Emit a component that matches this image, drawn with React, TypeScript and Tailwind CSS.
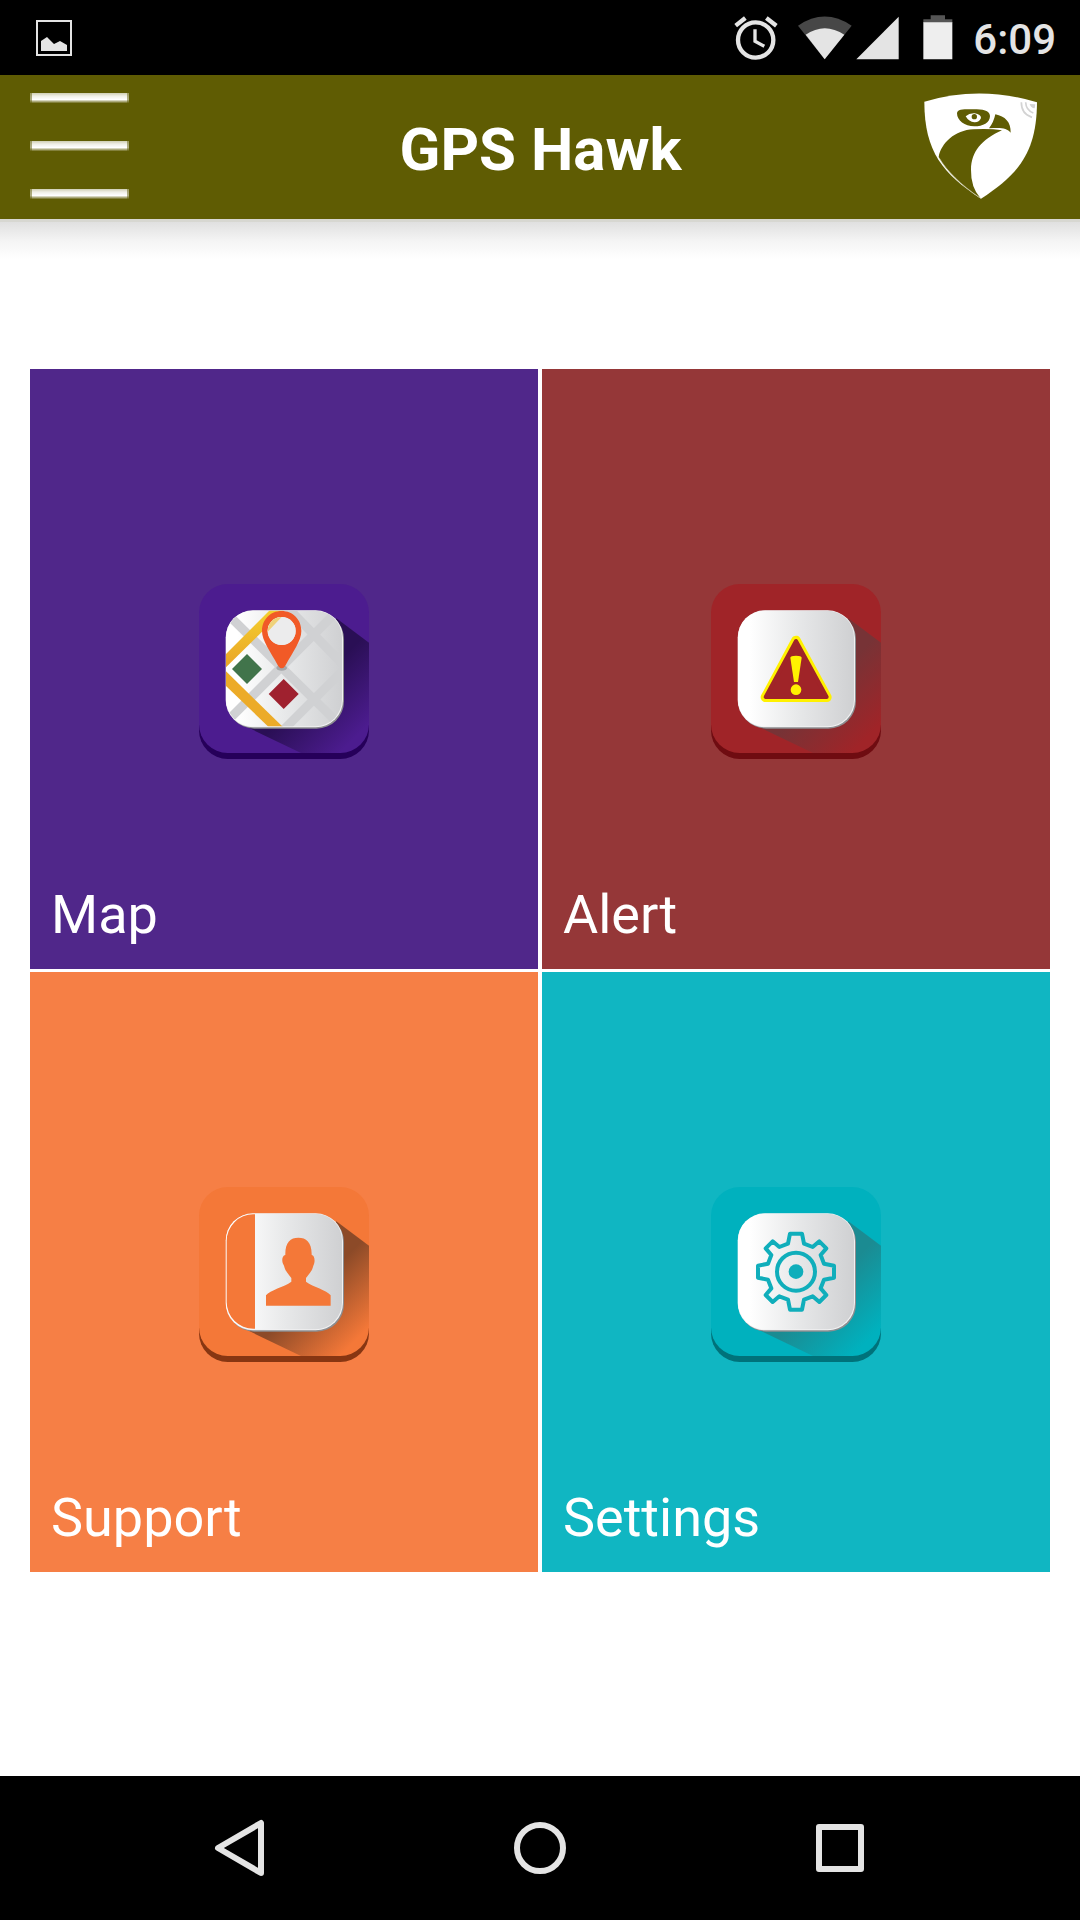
import React from 'react';

interface IconBaseProps {
    id: string;
    base: string;
    lip: string;
    shadow: string;
    children: React.ReactNode;
}

// Rounded app icon: coloured plate, long shadow and a light card on top
function IconBase({ id, base, lip, shadow, children }: IconBaseProps) {
    return (
        <svg viewBox="0 0 510 525" className="w-[170px] h-[175px] mx-auto" aria-hidden="true">
            <defs>
                <linearGradient id={`${id}-card`} x1="0" y1="0" x2="1" y2="0">
                    <stop offset="0.1" stopColor="#ffffff" />
                    <stop offset="0.5" stopColor="#e8e9ea" />
                    <stop offset="1" stopColor="#cfd0d2" />
                </linearGradient>
                <linearGradient id={`${id}-shadow`} gradientUnits="userSpaceOnUse" x1="290" y1="290" x2="465" y2="465">
                    <stop offset="0.2" stopColor={shadow} />
                    <stop offset="1" stopColor={shadow} stopOpacity="0" />
                </linearGradient>
                <clipPath id={`${id}-plate`}>
                    <rect width="510" height="507" rx="86" />
                </clipPath>
                <clipPath id={`${id}-clip`}>
                    <rect x="81" y="80" width="348" height="347" rx="80" />
                </clipPath>
            </defs>
            <rect y="18" width="510" height="507" rx="86" fill={lip} />
            <rect width="510" height="507" rx="86" fill={base} />
            <path d="M412 103L510 176V507H306L146 430Z" fill={`url(#${id}-shadow)`} clipPath={`url(#${id}-plate)`} />
            <rect x="84" y="84" width="351" height="350" rx="82" fill="#8d8e91" />
            <rect x="80" y="79" width="352" height="351" rx="82" fill="#f1f1f2" />
            <rect x="81" y="80" width="348" height="347" rx="80" fill={`url(#${id}-card)`} />
            <g clipPath={`url(#${id}-clip)`}>{children}</g>
        </svg>
    );
}

function MapIcon() {
    return (
        <IconBase id="map" base="#4c1c8f" lip="#26005a" shadow="#2a0f55">
            <defs>
                <linearGradient id="map-road" x1="0" y1="0" x2="0" y2="1">
                    <stop offset="0" stopColor="#f5d32f" />
                    <stop offset="1" stopColor="#e9a226" />
                </linearGradient>
            </defs>
            <g transform="translate(-27 -42)">
                <g stroke="#d0d1d3" strokeWidth="27" fill="none">
                    <path d="M105 125L470 485" />
                    <path d="M105 460L460 105" />
                    <path d="M270 490L480 280" />
                    <path d="M290 110L480 305" />
                </g>
                <path d="M100 260L250 110H292L100 300Z" fill="url(#map-road)" />
                <path d="M100 296L285 477H242L100 340Z" fill="#ecab28" />
                <path d="M171 252L216 297L171 342L126 297Z" fill="#41744b" />
                <path d="M281 327L326 372L281 417L236 372Z" fill="#9f212f" />
                <ellipse cx="275" cy="294" rx="16" ry="8" fill="#a6a7a9" />
                <path
                    d="M275 123C241 123 216 149 216 183C216 212 240 243 264 287Q275 303 286 287C310 243 334 212 334 183C334 149 309 123 275 123ZM275 141A42 42 0 1 1 275 225A42 42 0 1 1 275 141Z"
                    fill="#f15a27"
                    fillRule="evenodd"
                />
                <circle cx="275" cy="183" r="42" fill="#ececed" />
                <path d="M240 160A42 42 0 0 1 275 141L233 185Q233 170 240 160Z" fill="#efd27b" />
            </g>
        </IconBase>
    );
}

function AlertIcon() {
    return (
        <IconBase id="alert" base="#a02428" lip="#6f0c11" shadow="#773336">
            <g transform="translate(-33 -42)" strokeLinejoin="round">
                <path d="M288 211L196 382H381Z" fill="#fff100" stroke="#fff100" strokeWidth="28" />
                <path d="M288 213L197 381H380Z" fill="#a02428" stroke="#a02428" strokeWidth="12" />
                <path d="M271 263Q271 257 288 257Q305 257 305 263L294 336H282Z" fill="#fff100" />
                <circle cx="288" cy="359" r="16" fill="#fff100" />
            </g>
        </IconBase>
    );
}

function SupportIcon() {
    return (
        <IconBase id="support" base="#f47838" lip="#873612" shadow="#8c4a28">
            <g transform="translate(-27 -36)">
                <path d="M195 118H190A80 80 0 0 0 110 198V382A80 80 0 0 0 190 461H195Z" fill="#f47838" />
                <path
                    d="M325 188C349 188 366 202 365 240C375 241 376 262 370 272C366 290 355 299 348 309V320C370 336 410 345 422 361V392H228V361C240 345 282 336 304 320V309C297 299 286 290 282 272C274 262 275 241 286 240C285 202 301 188 325 188Z"
                    fill="#f47838"
                />
            </g>
        </IconBase>
    );
}

function SettingsIcon() {
    return (
        <IconBase id="settings" base="#00b1be" lip="#00727a" shadow="#1b8b92">
            <g transform="translate(255 254)" fill="none" stroke="#10aebb">
                <path
                    d="M-18-114H18L24-84L50-74L70-91L91-70L74-50L84-24L114-18V18L84 24L74 50L91 70L70 91L50 74L24 84L18 114H-18L-24 84L-50 74L-70 91L-91 70L-74 50L-84 24L-114 18V-18L-84-24L-74-50L-91-70L-70-91L-50-74L-24-84Z"
                    strokeWidth="12"
                    strokeLinejoin="round"
                />
                <circle r="57" strokeWidth="12" />
                <circle r="22" fill="#10aebb" stroke="none" />
            </g>
        </IconBase>
    );
}

function HawkLogo() {
    return (
        <svg viewBox="42 38 339 318" className="w-[113px] h-[106px]" role="img" aria-label="GPS Hawk logo">
            <path d="M43 64Q210 14 381 66C380 215 327 281 213 355C100 281 43 215 43 64Z" fill="#fff" />
            <path d="M86 230C93 189 135 149 190 147Q240 144 276 150C215 178 184 213 183 268Q182 320 211 353C151 312 111 274 86 230Z" fill="#5f5c03" />
            <path d="M87 232C112 274 151 312 212 354" fill="none" stroke="#c9c8a4" strokeWidth="2" />
            <path d="M141 99C142 86 162 87 190 87C218 87 239 90 240 107C240 127 219 138 193 138C164 138 141 121 141 99Z" fill="#5f5c03" />
            <path d="M167 108Q178 98 194 99Q213 102 213 113Q207 127 193 126Q177 125 167 108Z" fill="#fff" />
            <circle cx="193" cy="109" r="8" fill="#5f5c03" />
            <path d="M256 102C285 108 303 125 302 157C291 142 270 141 237 144Q251 126 256 102Z" fill="#5f5c03" />
            <g fill="none" stroke="#d3d3d3" strokeWidth="5">
                <path d="M334 66Q334 102 366 111" />
                <path d="M347 66Q348 90 370 98" />
            </g>
            <path d="M359 71L376 72L374 84Q362 83 359 71Z" fill="#d3d3d3" />
        </svg>
    );
}

function MenuIcon() {
    return (
        <svg viewBox="0 0 99 106" className="w-[99px] h-[106px]" aria-hidden="true">
            <defs>
                <linearGradient id="menu-line" x1="0" y1="0" x2="0" y2="1">
                    <stop offset="0" stopColor="#fff" stopOpacity="0.7" />
                    <stop offset="0.3" stopColor="#fff" stopOpacity="0.9" />
                    <stop offset="0.65" stopColor="#fff" />
                    <stop offset="1" stopColor="#fff" stopOpacity="0.1" />
                </linearGradient>
            </defs>
            {[0, 48, 96].map((y) => (
                <g key={y} fill="url(#menu-line)">
                    <rect x="2" y={y} width="95" height="10" />
                    <rect x="0" y={y} width="2" height="10" opacity="0.5" />
                    <rect x="97" y={y} width="2" height="10" opacity="0.5" />
                </g>
            ))}
        </svg>
    );
}

function StatusBar() {
    return (
        <div className="h-[75px] bg-black flex items-center pl-9 pr-6 text-[#e4e4e4]">
            <svg viewBox="0 0 36 36" className="size-9" aria-hidden="true">
                <rect x="1" y="1" width="34" height="34" fill="none" stroke="currentColor" strokeWidth="2" />
                <path d="M5 31V21L11 17L18 24L24 21L31 25V31Z" fill="currentColor" />
            </svg>
            <div className="ml-auto flex items-center">
                <svg viewBox="100 44 132 135" className="w-11 h-[45px]" fill="none" stroke="currentColor" aria-hidden="true">
                    <circle cx="165" cy="119" r="53" strokeWidth="13" />
                    <path d="M163 87V123L191 138" strokeWidth="10" />
                    <path d="M105 76L134 53M197 53L227 76" strokeWidth="13" />
                </svg>
                <svg viewBox="290 44 162 135" className="w-[54px] h-[45px] ml-5" aria-hidden="true">
                    <path d="M290 76Q370 21 451 76L370 177Z" fill="#474747" />
                    <path d="M313 103Q370 64 429 103L370 177Z" fill="currentColor" />
                </svg>
                <svg viewBox="466 44 129 135" className="w-[43px] h-[45px] ml-1" aria-hidden="true">
                    <path d="M594 49V177H467Z" fill="currentColor" />
                </svg>
                <svg viewBox="668 44 90 135" className="w-[30px] h-[45px] ml-6" aria-hidden="true">
                    <path d="M691 45H734V57H756V68H669V57H691Z" fill="#555" />
                    <path d="M669 66H756V177H669Z" fill="#eee" />
                </svg>
                <time className="ml-5 pt-1 text-[42px] leading-[50px] font-medium">6:09</time>
            </div>
        </div>
    );
}

const tiles = [
    { label: 'Map', color: 'bg-[#50278a]', Icon: MapIcon },
    { label: 'Alert', color: 'bg-[#953738]', Icon: AlertIcon },
    { label: 'Support', color: 'bg-[#f67f45]', Icon: SupportIcon },
    { label: 'Settings', color: 'bg-[#10b6c2]', Icon: SettingsIcon },
];

export default function App() {
    return (
        <div className="min-h-screen flex flex-col bg-white font-['Roboto',sans-serif]">
            <StatusBar />

            <header className="h-36 bg-[#5f5c03] grid grid-cols-[1fr_auto_1fr] items-center pl-[30px] pr-[43px] pb-0.5">
                <button type="button" aria-label="Menu" className="justify-self-start">
                    <MenuIcon />
                </button>
                <h1 className="pt-2 pl-3.5 text-white text-[60px] leading-[70px] font-bold">GPS Hawk</h1>
                <div className="justify-self-end">
                    <HawkLogo />
                </div>
            </header>
            <div className="h-10 border-t-3 border-[#d7d7d1] bg-linear-to-b from-[#e0e0e0] via-[#f4f4f4] to-white" />

            <main className="flex-1 px-[30px] pt-[110px] pb-12">
                <div className="grid grid-cols-2 gap-x-1 gap-y-[3px]">
                    {tiles.map(({ label, color, Icon }) => (
                        <button
                            key={label}
                            type="button"
                            className={`${color} h-[600px] flex flex-col justify-between pt-[215px] pb-[22px] px-[21px] text-left text-white`}
                        >
                            <Icon />
                            <span className="text-[54px] leading-[64px]">{label}</span>
                        </button>
                    ))}
                </div>
            </main>

            <nav className="h-36 bg-black grid grid-cols-3 px-[90px] text-[#e4e4e4]">
                <button type="button" aria-label="Back" className="flex items-center justify-center">
                    <svg viewBox="0 0 60 60" className="size-[60px]" fill="none" stroke="currentColor" strokeWidth="6" strokeLinejoin="round">
                        <path d="M51 5V55L8 30Z" />
                    </svg>
                </button>
                <button type="button" aria-label="Home" className="flex items-center justify-center">
                    <svg viewBox="0 0 60 60" className="size-[60px]" fill="none" stroke="currentColor" strokeWidth="6">
                        <circle cx="30" cy="30" r="23" />
                    </svg>
                </button>
                <button type="button" aria-label="Recent apps" className="flex items-center justify-center">
                    <svg viewBox="0 0 60 60" className="size-[60px]" fill="none" stroke="currentColor" strokeWidth="6" strokeLinejoin="round">
                        <rect x="9" y="9" width="42" height="42" />
                    </svg>
                </button>
            </nav>
        </div>
    );
}
